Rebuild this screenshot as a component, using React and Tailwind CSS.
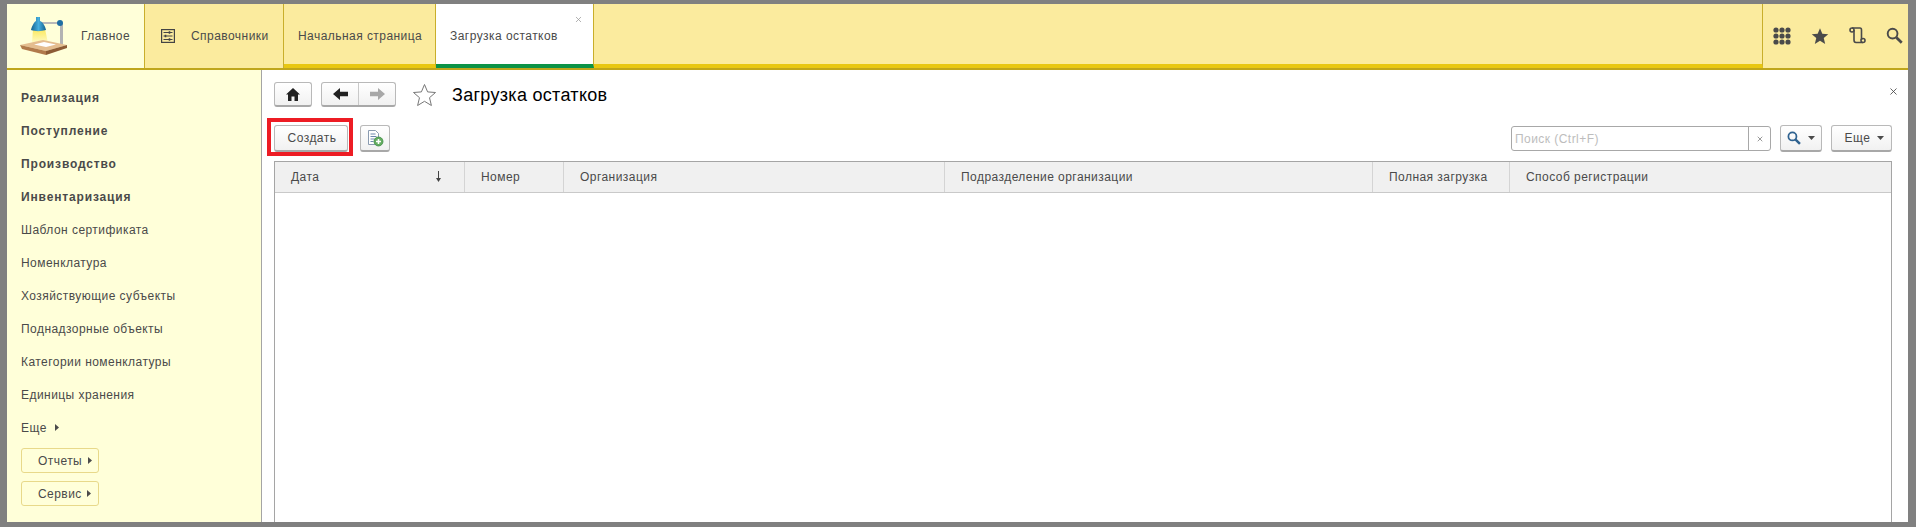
import { X } from "lucide-react";

const boldItems = ["Реализация", "Поступление", "Производство", "Инвентаризация"];
const plainItems = [
  "Шаблон сертификата",
  "Номенклатура",
  "Хозяйствующие субъекты",
  "Поднадзорные объекты",
  "Категории номенклатуры",
  "Единицы хранения",
];

const columns = [
  { title: "Дата", width: "w-[190px]", sort: true },
  { title: "Номер", width: "w-[99px]" },
  { title: "Организация", width: "w-[381px]" },
  { title: "Подразделение организации", width: "w-[428px]" },
  { title: "Полная загрузка", width: "w-[137px]" },
  { title: "Способ регистрации", width: "flex-1" },
];

const STAR = "M12 1.5l3.1 7.4 7.9.6-6 5.2 1.9 7.8L12 18.3l-6.9 4.2L7 14.7 1 9.5l7.9-.6z";

function Caret({ className }) {
  return (
    <svg width="7" height="4" viewBox="0 0 7 4" className={className}>
      <path d="M0 0h7L3.5 4z" fill="#4b4b4b" />
    </svg>
  );
}

function SideCaret({ className }) {
  return (
    <svg width="4" height="7" viewBox="0 0 4 7" className={className}>
      <path d="M0 0l4 3.5L0 7z" fill="#4b4b4b" />
    </svg>
  );
}

function Logo() {
  return (
    <svg width="50" height="40" viewBox="0 0 50 40" className="shrink-0">
      <defs>
        <linearGradient id="shade" x1="0" y1="0" x2="1" y2="0">
          <stop offset="0" stopColor="#14618f" />
          <stop offset="0.5" stopColor="#45aede" />
          <stop offset="1" stopColor="#14618f" />
        </linearGradient>
        <linearGradient id="glow" x1="0" y1="0" x2="0" y2="1">
          <stop offset="0" stopColor="#fbe85c" />
          <stop offset="1" stopColor="#fffbc4" />
        </linearGradient>
      </defs>
      <path d="M18 6h24v2H18z" fill="#b9b9b9" />
      <path d="M41 7h3v22h-3z" fill="#b3b3b3" />
      <circle cx="41" cy="7" r="3" fill="#1f6ea3" />
      <path d="M14 13 L13 27 H29 L26 13z" fill="url(#glow)" />
      <path d="M17 1h4v4c3 1 5 5 6 9c-5 1.500-11 1.500-15 0c1-4 3-8 5-9z" fill="url(#shade)" />
      <path d="M1 29 L24 24 L48 29 L27 35z" fill="#e4bd8f" />
      <path d="M1 29 L27 35 V39 L3 33z" fill="#b17a4b" />
      <path d="M27 35 L48 29 V32 L27 39z" fill="#8c5b34" />
      <path d="M15 28.500 L25 26 L37 28.500 L27 31z" fill="#ffffff" />
    </svg>
  );
}

function GridIcon() {
  const dots = [];
  for (let y = 0; y < 3; y++) {
    for (let x = 0; x < 3; x++) {
      dots.push(<circle key={`${x}-${y}`} cx={3 + x * 6} cy={3 + y * 6} r="2.6" fill="#4a4a4a" />);
    }
  }
  return (
    <svg width="18" height="18" viewBox="0 0 18 18">
      {dots}
    </svg>
  );
}

function ScrollIcon() {
  return (
    <svg width="17" height="17" viewBox="0 0 17 17" fill="none" stroke="#4a4a4a" strokeWidth="1.6">
      <circle cx="3" cy="3" r="2" />
      <path d="M3 1h8c1 0 1.5 1 1.5 2v10" />
      <path d="M5 3v10c0 1.5 1 2.5 2 2.5h7" />
      <circle cx="14" cy="13.500" r="2" />
    </svg>
  );
}

function SearchIcon({ size, color, width = 2 }) {
  return (
    <svg width={size} height={size} viewBox="0 0 16 16" fill="none" stroke={color}>
      <circle cx="6.200" cy="6.200" r="4.600" strokeWidth={width} />
      <path d="M9.800 9.800l5 5" strokeWidth={width + 0.8} />
    </svg>
  );
}

function HomeIcon() {
  return (
    <svg width="14" height="13" viewBox="0 0 14 13">
      <path d="M7 0L14 6.500h-2V13H8.500V8.500h-3V13H2V6.500H0z" fill="#222" />
    </svg>
  );
}

function NavArrow({ color, flip }) {
  return (
    <svg width="15" height="12" viewBox="0 0 15 12" className={flip ? "scale-x-[-1]" : ""}>
      <path d="M0 6L7 0v3.800h8v4.400H7V12z" fill={color} />
    </svg>
  );
}

function SortArrow({ className }) {
  return (
    <svg width="7" height="11" viewBox="0 0 7 11" className={className}>
      <path d="M3.500 0v8" stroke="#444" strokeWidth="1" />
      <path d="M1 7h5l-2.500 4z" fill="#444" />
    </svg>
  );
}

function SettingsIcon() {
  return (
    <svg width="14" height="14" viewBox="0 0 14 14" fill="none" stroke="#444" strokeWidth="1.2">
      <rect x="0.6" y="0.6" width="12.800" height="12.800" />
      <path d="M2.500 3.500h9M2.500 7h9M2.500 10.500h9" />
      <path d="M8.500 2.200v2.600M4.500 5.700v2.600M8.500 9.200v2.600" strokeWidth="1.6" />
    </svg>
  );
}

function DocAddIcon() {
  return (
    <svg width="18" height="18" viewBox="0 0 18 18">
      <path d="M2.500 1.500h7l3 3v11h-10z" fill="#fff" stroke="#8a9bb0" />
      <path d="M4.500 5h5M4.500 7.500h6M4.500 10h4M4.500 12.500h3" stroke="#6d89ad" />
      <circle cx="12.500" cy="12.500" r="4.500" fill="#63ad5f" stroke="#3f8c46" strokeWidth="0.8" />
      <path d="M10 12.500h5M12.500 10v5" stroke="#fff" strokeWidth="1.6" />
    </svg>
  );
}

const grayButton =
  "flex items-center justify-center rounded-[3px] border border-[#b9b9b9] border-b-2 border-b-[#a8a8a8] bg-gradient-to-b from-white to-[#f1f1f1]";

export default function App() {
  return (
    <div className="flex h-[527px] w-[1916px] flex-col overflow-hidden bg-[#808080] pt-[4px] pr-[8px] pb-[5px] pl-[7px] font-['Liberation_Sans',Arial,sans-serif] text-[12px] tracking-[0.45px] text-[#4a4a4a]">
      {/* top bar */}
      <div className="flex h-[66px] shrink-0 border-b-2 border-[#bfa61c] bg-[#fbeb9e]">
        <div className="flex w-[138px] items-center gap-[12px] border-r border-[#c9ae2b] bg-[#ffffd9] pl-[12px]">
          <Logo />
          <span>Главное</span>
        </div>
        <div className="flex w-[139px] items-center gap-[16px] border-r border-[#c9ae2b] pl-[16px]">
          <SettingsIcon />
          <span>Справочники</span>
        </div>
        <div className="flex w-[152px] items-center border-r border-[#c9ae2b] border-b-4 border-b-[#e8c712] pt-[4px] pl-[14px]">
          <span>Начальная страница</span>
        </div>
        <div className="relative flex w-[158px] items-center border-r border-[#c9ae2b] border-b-4 border-b-[#0b9347] bg-white pt-[4px] pl-[14px]">
          <span>Загрузка остатков</span>
          <X size={9} className="absolute top-[11px] right-[10px] text-[#9a9a9a]" />
        </div>
        <div className="flex-1 border-r border-[#c9ae2b] border-b-4 border-b-[#e8c712]" />
        <div className="flex w-[145px] items-center gap-[20px] pb-[1px] pl-[10px]">
          <GridIcon />
          <svg width="18" height="18" viewBox="0 0 24 24">
            <path d={STAR} fill="#4a4a4a" />
          </svg>
          <ScrollIcon />
          <SearchIcon size={17} color="#4a4a4a" width={1.8} />
        </div>
      </div>

      <div className="flex min-h-0 flex-1">
        {/* left panel */}
        <div className="flex w-[255px] shrink-0 flex-col border-r border-[#a5a5a5] bg-[#ffffd9] pt-[11px] pl-[14px]">
          {boldItems.map((item) => (
            <div key={item} className="flex h-[33px] items-center font-bold tracking-[0.85px]">
              {item}
            </div>
          ))}
          {plainItems.map((item) => (
            <div key={item} className="flex h-[33px] items-center">
              {item}
            </div>
          ))}
          <div className="flex h-[33px] items-center gap-[8px]">
            Еще
            <SideCaret />
          </div>
          <div className="mt-[4px] flex h-[25px] w-[78px] items-center rounded-[3px] border border-[#e8d98a] pl-[16px]">
            Отчеты
            <SideCaret className="ml-[6px]" />
          </div>
          <div className="mt-[8px] flex h-[25px] w-[78px] items-center rounded-[3px] border border-[#e8d98a] pl-[16px]">
            Сервис
            <SideCaret className="ml-[5px]" />
          </div>
        </div>

        {/* main area */}
        <div className="relative flex min-w-0 flex-1 flex-col bg-white pt-[12px] pr-[16px] pl-[12px]">
          <X size={11} strokeWidth={1.8} className="absolute top-[16px] right-[9px] text-[#444]" />

          <div className="flex h-[25px] items-center">
            <button className={`${grayButton} h-[25px] w-[38px]`}>
              <HomeIcon />
            </button>
            <div className={`${grayButton} ml-[9px] h-[25px] w-[75px]`}>
              <div className="flex h-full flex-1 items-center justify-center border-r border-[#c9c9c9]">
                <NavArrow color="#222" />
              </div>
              <div className="flex h-full flex-1 items-center justify-center">
                <NavArrow color="#a8a8a8" flip />
              </div>
            </div>
            <svg width="25" height="24" viewBox="0 0 24 24" className="ml-[16px]">
              <path d={STAR} fill="none" stroke="#777" strokeWidth="1" />
            </svg>
            <div className="mt-[2px] ml-[15px] text-[18px] tracking-[0.3px] text-black">Загрузка остатков</div>
          </div>

          <div className="mt-[18px] flex h-[27px] items-center">
            <div className="relative">
              <button className={`${grayButton} h-[27px] w-[74px] pl-[2px]`}>Создать</button>
              <div className="absolute -top-[7px] -right-[5px] -bottom-[4px] -left-[7px] border-4 border-[#ed1c24]" />
            </div>
            <button className={`${grayButton} ml-[12px] h-[27px] w-[30px]`}>
              <DocAddIcon />
            </button>

            <div className="ml-auto flex h-[25px] w-[260px] items-center rounded-[3px] border border-[#a8a8a8]">
              <div className="flex-1 pl-[3px] text-[#bdbdbd]">Поиск (Ctrl+F)</div>
              <div className="flex h-full w-[22px] items-center justify-center border-l border-[#a8a8a8]">
                <X size={8} strokeWidth={1.8} className="text-[#555]" />
              </div>
            </div>
            <button className={`${grayButton} ml-[9px] h-[27px] w-[42px] gap-[7px]`}>
              <SearchIcon size={14} color="#2f6290" />
              <Caret />
            </button>
            <button className={`${grayButton} ml-[9px] h-[27px] w-[61px] gap-[7px] pl-[6px]`}>
              Еще
              <Caret />
            </button>
          </div>

          {/* table */}
          <div className="mt-[9px] flex-1 border border-b-0 border-[#a5a5a5]">
            <div className="flex h-[31px] border-b border-[#c9c9c9] bg-[#f0f0f0]">
              {columns.map((col) => (
                <div
                  key={col.title}
                  className={`${col.width} flex items-center border-r border-[#d4d4d4] pl-[16px] last:border-r-0`}
                >
                  <span>{col.title}</span>
                  {col.sort && <SortArrow className="mb-[2px] ml-auto mr-[22px]" />}
                </div>
              ))}
            </div>
          </div>
        </div>
      </div>
    </div>
  );
}
